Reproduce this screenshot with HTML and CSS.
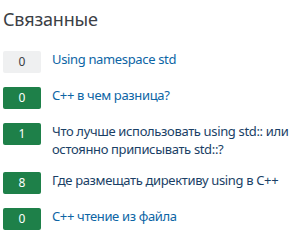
FILE: index.html
```html
<!DOCTYPE html>
<html lang="ru">
<head>
    <meta charset="UTF-8">
    <title>Связанные</title>
    <link rel="stylesheet" href="styles.css">
</head>
<body>
    <div class="related">
        <h4>Связанные</h4>
        <div class="item">
            <span class="votes">0</span>
            <a href="#" class="link">Using namespace std</a>
        </div>
        <div class="item">
            <span class="votes answered">0</span>
            <a href="#" class="link">C++ в чем разница?</a>
        </div>
        <div class="item">
            <span class="votes answered">1</span>
            <a href="#" class="link visited">Что лучше использовать using std:: или остоянно приписывать std::?</a>
        </div>
        <div class="item">
            <span class="votes answered">8</span>
            <a href="#" class="link visited">Где размещать директиву using в C++</a>
        </div>
        <div class="item">
            <span class="votes answered">0</span>
            <a href="#" class="link">C++ чтение из файла</a>
        </div>
    </div>
</body>
</html>
```

FILE: styles.css
```css
body {
    margin: 0;
    padding: 0 3px;
    background: #fff;
    font-family: "Noto Sans", "Open Sans", Arial, sans-serif;
}
.related h4 {
    margin: 7px 0 19px;
    font-size: 18px;
    font-weight: normal;
    letter-spacing: -0.2px;
    color: #3b4045;
    line-height: 24px;
}
.item {
    display: flex;
    align-items: flex-start;
    margin-bottom: 13px;
}
.votes {
    flex: 0 0 38px;
    height: 22px;
    line-height: 22px;
    margin-top: 1px;
    margin-right: 11px;
    text-align: center;
    font-size: 12px;
    border-radius: 2px;
    background: #eff0f1;
    color: #3b4045;
}
.votes.answered {
    background: #1e8049;
    color: #fff;
}
.link {
    font-size: 13px;
    letter-spacing: -0.35px;
    line-height: 18px;
    color: #0c65a5;
    text-decoration: none;
}
.link.visited {
    color: #1a3f66;
}
```
